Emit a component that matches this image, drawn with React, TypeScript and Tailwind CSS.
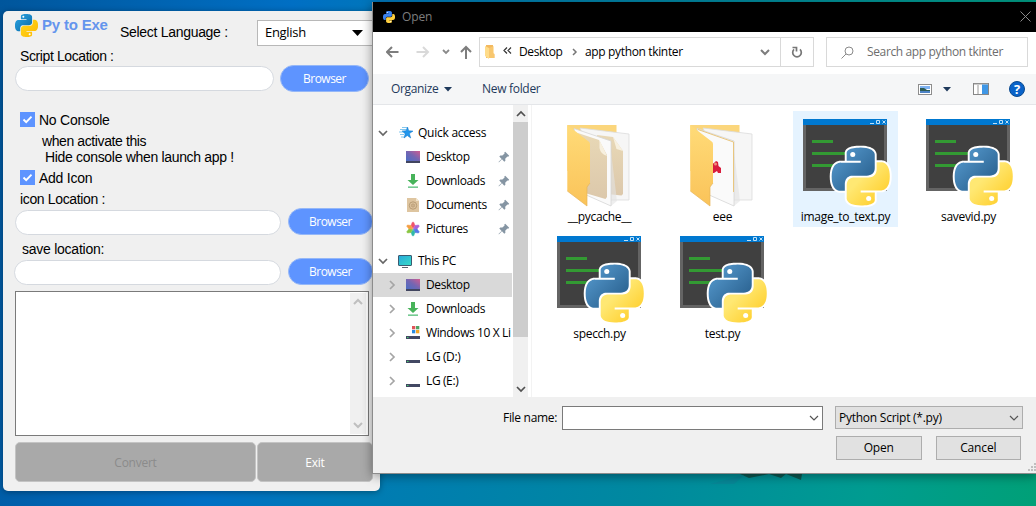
import React from "react";

const BLUE =
  "M14.25.18l.9.2.73.26.59.3.45.32.34.34.25.34.16.33.1.3.04.26.02.2-.01.13V8.5l-.05.63-.13.55-.21.46-.26.38-.3.31-.33.25-.35.19-.35.14-.33.1-.3.07-.26.04-.21.02H8.77l-.69.05-.59.14-.5.22-.41.27-.33.32-.27.35-.2.36-.15.37-.1.35-.07.32-.04.27-.02.21v3.06H3.17l-.21-.03-.28-.07-.32-.12-.35-.18-.36-.26-.36-.36-.35-.46-.32-.59-.28-.73-.21-.88-.14-1.05-.05-1.23.06-1.22.16-1.04.24-.87.32-.71.36-.57.4-.44.42-.33.42-.24.4-.16.36-.1.32-.05.24-.01h.16l.06.01h8.16v-.83H6.18l-.01-2.75-.02-.37.05-.34.11-.31.17-.28.25-.26.31-.23.38-.2.44-.18.51-.15.58-.12.64-.1.71-.06.77-.04.84-.02 1.27.05z";
const YELLOW =
  "M21.04 6.11l.28.06.32.12.35.18.36.27.36.35.35.47.32.59.28.73.21.88.14 1.04.05 1.23-.06 1.23-.16 1.04-.24.86-.32.71-.36.57-.4.45-.42.33-.42.24-.4.16-.36.09-.32.05-.24.02-.16-.01h-8.22v.82h5.84l.01 2.76.02.36-.05.34-.11.31-.17.29-.25.25-.31.24-.38.2-.44.17-.51.15-.58.13-.64.09-.71.07-.77.04-.84.01-1.27-.04-1.07-.14-.9-.2-.73-.25-.59-.3-.45-.33-.34-.34-.25-.34-.16-.33-.1-.3-.04-.25-.02-.2.01-.13v-5.34l.05-.64.13-.54.21-.46.26-.38.3-.32.33-.24.35-.2.35-.14.33-.1.3-.06.26-.04.21-.02.13-.01h5.84l.69-.05.59-.14.5-.21.41-.28.33-.32.27-.35.2-.36.15-.36.1-.35.07-.32.04-.28.02-.21V6.07h2.09z";

function PythonShapes({ blue, yellow }: { blue: string; yellow: string }) {
  return (
    <>
      <path d={BLUE} fill={blue} />
      <path d={YELLOW} fill={yellow} />
      <circle cx="8.7" cy="2.9" r="1.05" fill="#fff" />
      <circle cx="15.3" cy="21.1" r="1.05" fill="#fff" />
    </>
  );
}

function Gradients() {
  return (
    <svg width="0" height="0" className="absolute">
      <defs>
        <linearGradient id="pyBlue" x1="0" y1="0" x2="1" y2="1">
          <stop offset="0" stopColor="#5a9fd4" />
          <stop offset="0.75" stopColor="#306998" />
          <stop offset="1" stopColor="#28598a" />
        </linearGradient>
        <linearGradient id="pyYellow" x1="0" y1="0" x2="1" y2="1">
          <stop offset="0.35" stopColor="#ffe873" />
          <stop offset="0.75" stopColor="#ffd43b" />
        </linearGradient>
        <linearGradient id="logoBlue" x1="0" y1="0" x2="1" y2="1">
          <stop offset="0" stopColor="#2ea7e6" />
          <stop offset="1" stopColor="#0768a5" />
        </linearGradient>
        <linearGradient id="logoYellow" x1="0" y1="0" x2="1" y2="1">
          <stop offset="0" stopColor="#ffda1c" />
          <stop offset="1" stopColor="#feb705" />
        </linearGradient>
        <linearGradient id="flap" x1="0" y1="0" x2="0" y2="1">
          <stop offset="0" stopColor="#ffdb78" />
          <stop offset="1" stopColor="#fac359" />
        </linearGradient>
        <linearGradient id="sheet" x1="0" y1="0" x2="0" y2="1">
          <stop offset="0" stopColor="#e8d8b6" />
          <stop offset="1" stopColor="#dcc8ab" />
        </linearGradient>
        <linearGradient id="desk" x1="0" y1="1" x2="1" y2="0">
          <stop offset="0" stopColor="#4a6dc4" />
          <stop offset="0.5" stopColor="#7466b2" />
          <stop offset="1" stopColor="#cf5c91" />
        </linearGradient>
        <linearGradient id="pc" x1="0" y1="0" x2="1" y2="1">
          <stop offset="0" stopColor="#29a8dc" />
          <stop offset="1" stopColor="#36ddc6" />
        </linearGradient>
      </defs>
    </svg>
  );
}

function Pill({ className }: { className: string }) {
  return <div className={`shrink-0 rounded-full border border-[#d5d9df] bg-white ${className}`} />;
}

function BrowserButton({ className }: { className: string }) {
  return (
    <button
      className={`flex h-[27px] shrink-0 items-center justify-center rounded-full border border-[#94b7f8] bg-[#5e94ff] font-['Open_Sans',sans-serif] text-[12px] tracking-[-0.5px] text-white ${className}`}
    >
      Browser
    </button>
  );
}

function Check({ label }: { label: string }) {
  return (
    <div className="ml-[17px] flex h-[15px] items-center gap-[4px]">
      <svg width="15" height="15" className="shrink-0">
        <rect width="15" height="15" fill="#5e94ff" />
        <path d="M3.5 7.5l2.700 2.700L11.500 4.700" fill="none" stroke="#fff" strokeWidth="1.9" />
      </svg>
      <span>{label}</span>
    </div>
  );
}

function Chevron({
  dir,
  color,
  weight = 1.7,
  className = "",
}: {
  dir: "down" | "up" | "right";
  color: string;
  weight?: number;
  className?: string;
}) {
  const d = { down: "M1 3l4 4 4-4", up: "M1 7l4-4 4 4", right: "M3 1l4 4-4 4" }[dir];
  return (
    <svg width="10" height="10" className={`shrink-0 ${className}`}>
      <path d={d} fill="none" stroke={color} strokeWidth={weight} />
    </svg>
  );
}

function ConverterWindow() {
  return (
    <section className="absolute left-[3px] top-[11px] flex h-[480px] w-[377px] flex-col overflow-hidden rounded-[5px] bg-[#f0f0f0] font-['Liberation_Sans',sans-serif] text-[14px] leading-[16px] tracking-[-0.25px] text-black shadow-[0_1px_6px_rgba(0,0,0,0.35)]">
      <header className="flex h-[37px] shrink-0 items-start">
        <svg viewBox="0 0 24 24" className="ml-[12px] mt-[3px] h-[23px] w-[23px] shrink-0">
          <PythonShapes blue="url(#logoBlue)" yellow="url(#logoYellow)" />
        </svg>
        <h1 className="ml-[4px] mt-[6px] w-[78px] shrink-0 whitespace-nowrap text-[15px] font-bold tracking-[-0.2px] text-[#6495ed]">Py to Exe</h1>
        <span className="mt-[13px] w-[137px] shrink-0 whitespace-nowrap tracking-[-0.3px]">Select Language :</span>
        <div className="mt-[9px] flex h-[26px] w-[130px] shrink-0 items-center border border-[#b8b8b8] bg-white pl-[7px] font-['Open_Sans',sans-serif] text-[13px] tracking-[-0.3px]">
          <span className="-mt-[2px] w-[87px]">English</span>
          <svg width="11" height="6">
            <path d="M0 0h11L5.500 6z" />
          </svg>
        </div>
      </header>
      <label className="ml-[17px] h-[18px] shrink-0 tracking-[-0.4px]">Script Location :</label>
      <div className="flex h-[46px] shrink-0 pl-[12px]">
        <Pill className="h-[25px] w-[259px]" />
        <BrowserButton className="-mt-px ml-[6px] w-[89px]" />
      </div>
      <Check label="No Console" />
      <p className="ml-[39px] mt-[6px] h-[16px] tracking-[-0.4px]">when activate this</p>
      <p className="ml-[42px] h-[21px] tracking-[-0.32px]">Hide console when launch app !</p>
      <Check label="Add Icon" />
      <label className="ml-[17px] mt-[6px] h-[19px] tracking-[-0.35px]">icon Location :</label>
      <div className="flex h-[31px] shrink-0 pl-[12px]">
        <Pill className="h-[25px] w-[266px]" />
        <BrowserButton className="-mt-[2px] ml-[7px] w-[85px]" />
      </div>
      <label className="ml-[19px] h-[19px]">save location:</label>
      <div className="flex h-[31px] shrink-0 pl-[11px]">
        <Pill className="h-[25px] w-[267px]" />
        <BrowserButton className="-mt-[2px] ml-[7px] w-[85px]" />
      </div>
      <div className="ml-[12px] flex h-[145px] w-[354px] shrink-0 justify-end border border-[#7a7a7a] bg-white py-px pr-[2px]">
        <div className="flex w-[16px] flex-col items-center justify-between bg-[#f0f0f0] py-[4px]">
          <Chevron dir="up" color="#bfbfbf" weight={2} />
          <Chevron dir="down" color="#bfbfbf" weight={2} />
        </div>
      </div>
      <div className="ml-[12px] mt-[6px] flex h-[40px] gap-px font-['Open_Sans',sans-serif] text-[12px] tracking-normal">
        <button className="w-[241px] rounded-[5px] border border-[#c4c4c4] bg-[#a9a9a9] pt-px tracking-[-0.25px] text-[#8b8b8b]">Convert</button>
        <button className="w-[116px] rounded-[5px] border border-[#c4c4c4] bg-[#a9a9a9] pt-px tracking-[-0.25px] text-white">Exit</button>
      </div>
    </section>
  );
}

function TitleBar() {
  return (
    <div className="flex h-[30px] shrink-0 items-center bg-black pl-[10px] pr-[5px] text-[#7d7d7d]">
      <svg viewBox="0 0 24 24" width="12" height="12">
        <PythonShapes blue="#3b82f0" yellow="#ffd040" />
      </svg>
      <span className="ml-[7px] grow text-[12px]">Open</span>
      <svg width="11" height="11" className="mb-px">
        <path d="M.5.5l10 10M10.500.5l-10 10" stroke="#8a8a8a" />
      </svg>
    </div>
  );
}

function NavBar() {
  return (
    <div className="flex h-[42px] shrink-0 items-start pl-[13px] pt-[5px]">
      <svg width="86" height="30" fill="none" strokeWidth="2" className="mr-[7px] shrink-0">
        <path d="M12.500 15H1M6 10l-5 5 5 5" stroke="#7d7d7d" />
        <path d="M30.500 15H42M37 10l5 5-5 5" stroke="#d9d9d9" />
        <path d="M57 13l3 3 3-3" stroke="#8a8a8a" strokeWidth="1.8" />
        <path d="M80 22V10M75 15l5-5 5 5" stroke="#7d7d7d" />
      </svg>
      <div className="flex h-[30px] w-[302px] items-center border border-[#d9d9d9]">
        <svg width="10" height="14" className="ml-[5px]">
          <path d="M1 0h7v8l1.500 1v4H1z" fill="#f3b95f" />
          <path d="M0 1l4 2v11l-4-3z" fill="#ffdc8a" />
          <path d="M4 3l5-2v8l.5 1v3H4z" fill="#fcd07a" opacity=".6" />
        </svg>
        <svg width="9" height="7" className="mb-[3px] ml-[8px]">
          <path d="M4 .5L1 3.500l3 3M8 .5L5 3.500l3 3" fill="none" stroke="#333" strokeWidth="1.2" />
        </svg>
        <span className="ml-[7px] w-[53px] whitespace-nowrap tracking-[-0.4px]">Desktop</span>
        <svg width="6" height="8">
          <path d="M1 1l3 3-3 3" fill="none" stroke="#777" strokeWidth="1.5" />
        </svg>
        <span className="ml-[7px] grow whitespace-nowrap tracking-[-0.35px]">app python tkinter</span>
        <Chevron dir="down" color="#7d7d7d" weight={2} className="mr-[10px]" />
      </div>
      <div className="-ml-px flex h-[30px] w-[34px] items-center justify-center border border-[#d9d9d9]">
        <svg width="12" height="12" fill="none" stroke="#777" strokeWidth="1.700">
          <path d="M9 3.400A4.300 4.300 0 1 1 3 3.400M1.500 1.500h4v4" />
        </svg>
      </div>
      <div className="ml-[12px] flex h-[30px] w-[202px] items-center border border-[#d9d9d9] pl-[14px] text-[#6d6d6d]">
        <svg width="13" height="13" fill="none" stroke="#8a8a8a">
          <circle cx="8" cy="5" r="4" />
          <path d="M5 8L.5 12.500" />
        </svg>
        <span className="ml-[13px] whitespace-nowrap tracking-[-0.37px]">Search app python tkinter</span>
      </div>
    </div>
  );
}

function Toolbar() {
  return (
    <div className="flex h-[31px] shrink-0 items-center border-b border-[#e4e6e9] bg-[#f5f6f7] pl-[18px] pr-[11px] text-[#1e395b]">
      <span className="w-[53px] whitespace-nowrap tracking-[-0.35px]">Organize</span>
      <svg width="8" height="5">
        <path d="M0 0h8L4 4.500z" fill="#1e395b" />
      </svg>
      <span className="ml-[30px] grow tracking-[-0.3px]">New folder</span>
      <svg width="14" height="11">
        <rect x=".5" y=".5" width="13" height="10" fill="#fff" stroke="#8d8d8d" />
        <rect x="2" y="2" width="10" height="3" fill="#7fb3f2" />
        <path d="M2 4h4l3 2h3v1H2z" fill="#2d5b53" />
        <rect x="2" y="7" width="10" height="2" fill="#4d83c6" />
      </svg>
      <svg width="8" height="5" className="ml-[11px]">
        <path d="M0 0h8L4 4.500z" fill="#1e395b" />
      </svg>
      <svg width="16" height="12" className="ml-[22px]">
        <rect x=".5" y=".5" width="15" height="11" fill="#fff" stroke="#868686" />
        <path d="M1 1h14M5 2v9" stroke="#9a9a9a" />
        <rect x="9" y="1.500" width="6" height="9.500" fill="#3f97e6" />
      </svg>
      <span className="ml-[20px] flex h-[16px] w-[16px] items-center justify-center rounded-full border border-[#0a4a8f] bg-[#0a63c9] text-[13px] font-bold leading-none text-white">?</span>
    </div>
  );
}

type Kind = "star" | "desktop" | "down" | "doc" | "pic" | "pc" | "win" | "drive";

function SideIcon({ kind }: { kind: Kind }) {
  return (
    <svg width="16" height="16" className="shrink-0">
      {kind === "star" && (
        <>
          <path d="M9.500 2l1.200 3.800 4.300.3-3.600 2.500 1.300 4.400L9.300 10.500 6 13l1.200-4.300L4 6l4-.2z" fill="#2196ec" stroke="#0873c8" strokeWidth=".5" />
          <path d="M4 2.500h5M2 4.500h6M1 7h5M2 9.500h4M3 12h3" stroke="#4dafe8" strokeWidth=".7" />
        </>
      )}
      {kind === "desktop" && (
        <>
          <rect x="1" y="2" width="14" height="10" fill="url(#desk)" />
          <rect x="1" y="12" width="14" height="2" fill="#41455f" />
        </>
      )}
      {kind === "down" && (
        <>
          <path d="M6 1h4v6h3.500L8 12 2.500 7H6z" fill="#47b35a" />
          <rect x="3" y="13.500" width="10" height="1.300" fill="#55bd78" />
        </>
      )}
      {kind === "doc" && (
        <>
          <path d="M2 1h9l3 3v11H2z" fill="#dec5a0" />
          <path d="M11 1v3h3z" fill="#f2e4cb" />
          <circle cx="8" cy="8.500" r="3.700" fill="none" stroke="#b79b74" />
          <circle cx="8" cy="8.500" r="1.700" fill="#cbb08a" stroke="#b79b74" strokeWidth=".7" />
        </>
      )}
      {kind === "pic" &&
        ["#f0546b", "#ab62d6", "#5478e8", "#30b8a8", "#88c540", "#f59e42"].map((c, i) => (
          <path key={c} d="M8 7.500L6 4.500 7.300 1.200h1.400L10 4.500z" fill={c} stroke={c} strokeWidth=".5" transform={`rotate(${i * 60} 8 8)`} />
        ))}
      {kind === "pc" && (
        <>
          <rect x="1.500" y="2.500" width="13" height="10" rx=".5" fill="url(#pc)" stroke="#3c5a70" />
          <path d="M5 14.500h6" stroke="#5b6670" />
        </>
      )}
      {kind === "win" && (
        <>
          <rect x="7" y="1" width="3.300" height="3.300" fill="#df5458" />
          <rect x="11" y="1" width="3.300" height="3.300" fill="#4fa563" />
          <rect x="7" y="5" width="3.300" height="3.300" fill="#2c8be0" />
          <rect x="11" y="5" width="3.300" height="3.300" fill="#f3a526" />
        </>
      )}
      {(kind === "win" || kind === "drive") && (
        <>
          <rect x="1" y="11" width="14" height="3" fill="#424863" />
          <rect x="2" y="12" width="1.500" height="1" fill="#45cf6b" />
        </>
      )}
    </svg>
  );
}

function QuickRow({ kind, label }: { kind: Kind; label: string }) {
  return (
    <div className="flex h-[24px] items-center pl-[32px]">
      <SideIcon kind={kind} />
      <span className="ml-[5px] w-[72px] whitespace-nowrap">{label}</span>
      <svg width="12" height="12" className="shrink-0">
        <path d="M7.200.8l4 4-1 .9-.8-.3-2.200 2.300.2 2-1.100 1L4 8.300 1 11.200.6 11.300.7 10.800 3.600 7.900 1.300 5.500l1-1 2.100.1L6.600 2.400l-.3-.8z" fill="#8595a3" />
      </svg>
    </div>
  );
}

function DriveRow({ kind, label, selected = false }: { kind: Kind; label: string; selected?: boolean }) {
  return (
    <div className={`flex h-[24px] items-center pl-[14px] ${selected ? "bg-[#d9d9d9]" : ""}`}>
      <Chevron dir="right" color="#a5a5a5" className="mr-[8px]" />
      <SideIcon kind={kind} />
      <span className="ml-[5px] whitespace-nowrap">{label}</span>
    </div>
  );
}

function Sidebar() {
  return (
    <nav className="w-[139px] shrink-0 pt-[16px] tracking-[-0.38px]">
      <div className="flex h-[24px] items-center pl-[5px]">
        <Chevron dir="down" color="#666" className="mr-[10px]" />
        <SideIcon kind="star" />
        <span className="ml-[4px] tracking-[-0.25px]">Quick access</span>
      </div>
      <QuickRow kind="desktop" label="Desktop" />
      <QuickRow kind="down" label="Downloads" />
      <QuickRow kind="doc" label="Documents" />
      <QuickRow kind="pic" label="Pictures" />
      <div className="mt-[8px] flex h-[24px] items-center pl-[5px]">
        <Chevron dir="down" color="#666" className="mr-[9px]" />
        <SideIcon kind="pc" />
        <span className="ml-[5px]">This PC</span>
      </div>
      <DriveRow kind="desktop" label="Desktop" selected />
      <DriveRow kind="down" label="Downloads" />
      <DriveRow kind="win" label="Windows 10 X Li" />
      <DriveRow kind="drive" label="LG (D:)" />
      <DriveRow kind="drive" label="LG (E:)" />
    </nav>
  );
}

function FolderIcon({ variant }: { variant: "sheets" | "picture" }) {
  return (
    <svg width="105" height="98">
      <path d="M20.300 14H69.500V60H20.300z" fill="#fbd67c" />
      <path d="M33 17L82 23v66L62 89z" fill="#f6f6f6" stroke="#dcdcdc" strokeWidth=".8" />
      {variant === "sheets" && (
        <>
          <path d="M50 24l16 2 10 14v43l-1.500 1.500L60 83z" fill="url(#sheet)" />
          <path d="M66 26l3.500 12 6.500 2z" fill="#f7f0df" />
        </>
      )}
      <path d="M64 40l6 50-6 5z" fill="#e3e3e3" opacity=".6" />
      <path d="M27 17.500L64 30v65L37 83z" fill="#fafafa" stroke="#d5d5d5" strokeWidth=".8" />
      {variant === "sheets" ? (
        <>
          <path d="M31 22l21 7 8 15v42l-1.500 2L38 82z" fill="url(#sheet)" />
          <path d="M52.500 29v8q1 6 7.500 8z" fill="#f7f0df" />
        </>
      ) : (
        <>
          <path d="M28 18.500L63.500 31v50" fill="none" stroke="#e9c67e" />
          <path d="M44 52l2-2 2 1 .5 4 2.500 2v5h-3l-1-2-3 2h-2v-9z" fill="#d91c3c" />
          <circle cx="45.500" cy="53" r="1.500" fill="#f09077" />
        </>
      )}
      <path d="M20.300 14L41 30q2 1.200 2 3v39l-3 4v19L20.300 80z" fill="url(#flap)" />
      <path d="M20.300 80L40 95V76l3-4" fill="none" stroke="#e7b45a" strokeWidth=".7" />
    </svg>
  );
}

function ScriptIcon() {
  return (
    <svg width="105" height="98">
      <rect x="10" y="8" width="84" height="72" fill="#646464" />
      <rect x="13" y="14" width="78" height="63" fill="#404040" />
      <rect x="10" y="8" width="84" height="6" fill="#0078d0" />
      <path d="M77 12.500h4M83.500 9.500h3v3h-3zM89.500 9.500l3 3M92.500 9.500l-3 3" stroke="#bfe0f7" strokeWidth="1" fill="none" />
      <path d="M19 30.500h21M19 42.500h36M19 54.500h24" stroke="#339a33" strokeWidth="3" />
      <g transform="translate(38.800 36.600) scale(2.410)">
        <path d={BLUE} fill="#fff" stroke="#fff" strokeWidth="1.600" strokeLinejoin="round" />
        <path d={YELLOW} fill="#fff" stroke="#fff" strokeWidth="1.600" strokeLinejoin="round" />
        <PythonShapes blue="url(#pyBlue)" yellow="url(#pyYellow)" />
      </g>
    </svg>
  );
}

const FILES: { name: string; icon: "sheets" | "picture" | "script"; active?: boolean }[] = [
  { name: "__pycache__", icon: "sheets" },
  { name: "eee", icon: "picture" },
  { name: "image_to_text.py", icon: "script", active: true },
  { name: "savevid.py", icon: "script" },
  { name: "specch.py", icon: "script" },
  { name: "test.py", icon: "script" },
];

function FileGrid() {
  return (
    <div className="ml-[15px] grid grid-cols-[repeat(4,105px)] content-start gap-x-[18px] gap-y-px pt-[6px]">
      {FILES.map((f) => (
        <div key={f.name} className={`flex h-[116px] flex-col items-center ${f.active ? "bg-[#e5f3ff]" : ""}`}>
          {f.icon === "script" ? <ScriptIcon /> : <FolderIcon variant={f.icon} />}
          <span className="whitespace-nowrap tracking-[-0.3px]">{f.name}</span>
        </div>
      ))}
    </div>
  );
}

function Footer() {
  return (
    <div className="flex h-[76px] shrink-0 flex-col bg-[#f0f0f0] pt-[9px]">
      <div className="flex h-[30px] items-start">
        <span className="ml-[130px] mt-[4px] w-[59px] whitespace-nowrap tracking-[-0.3px]">File name:</span>
        <div className="flex h-[24px] w-[261px] items-center justify-end border border-[#7a7a7a] bg-white pr-[3px]">
          <Chevron dir="down" color="#555" weight={1.2} />
        </div>
        <div className="ml-[12px] flex h-[23px] w-[188px] items-center justify-between border border-[#adadad] bg-[#e1e1e1] pl-[3px] pr-[3px]">
          <span className="whitespace-nowrap tracking-[-0.25px]">Python Script (*.py)</span>
          <Chevron dir="down" color="#555" weight={1.2} />
        </div>
      </div>
      <div className="flex">
        <button className="ml-[463px] h-[24px] w-[86px] border border-[#adadad] bg-[#e1e1e1]">Open</button>
        <button className="ml-[14px] h-[24px] w-[86px] border border-[#adadad] bg-[#e1e1e1]">Cancel</button>
        <svg width="8" height="9" className="ml-[7px] mt-[27px]" fill="#bfbfbf">
          <path d="M0 6h2v2H0zM3 6h2v2H3zM6 6h2v2H6zM3 3h2v2H3zM6 3h2v2H6zM6 0h2v2H6z" />
        </svg>
      </div>
    </div>
  );
}

function OpenDialog() {
  return (
    <section className="absolute left-[372px] top-[2px] flex h-[472px] w-[664px] flex-col border-b border-l border-[#8c8c8c] bg-white font-['Open_Sans','Noto_Sans',sans-serif] text-[12px] leading-[16px] tracking-[-0.15px] text-black shadow-[0_2px_10px_rgba(0,0,0,0.4)]">
      <TitleBar />
      <NavBar />
      <Toolbar />
      <div className="flex h-[292px] shrink-0">
        <Sidebar />
        <div className="ml-px mr-[3px] flex w-[15px] shrink-0 flex-col items-center justify-between bg-[#f0f0f0]">
          <Chevron dir="up" color="#505050" className="mb-[3px] mt-[4px]" />
          <div className="w-full grow bg-[#cdcdcd]" />
          <Chevron dir="down" color="#505050" className="mb-[3px] mt-[47px]" />
        </div>
        <div className="flex border-l border-[#f3f3f3]">
          <FileGrid />
        </div>
      </div>
      <Footer />
    </section>
  );
}

export default function App() {
  return (
    <main className="relative h-[506px] w-[1036px] overflow-hidden bg-[linear-gradient(100deg,#00569c_0%,#006fc4_26%,#007ab5_38%,#00899f_65%,#009c90_85%,#00a077_100%)]">
      <Gradients />
      <svg width="120" height="14" className="absolute left-[710px] top-[470px]">
        <path d="M30 4h62l-1 6-15-6-5 4-12-4-20 4z" fill="#0c5952" />
        <path d="M0 14L34 5l-10 9z" fill="#078797" />
      </svg>
      <ConverterWindow />
      <OpenDialog />
    </main>
  );
}
